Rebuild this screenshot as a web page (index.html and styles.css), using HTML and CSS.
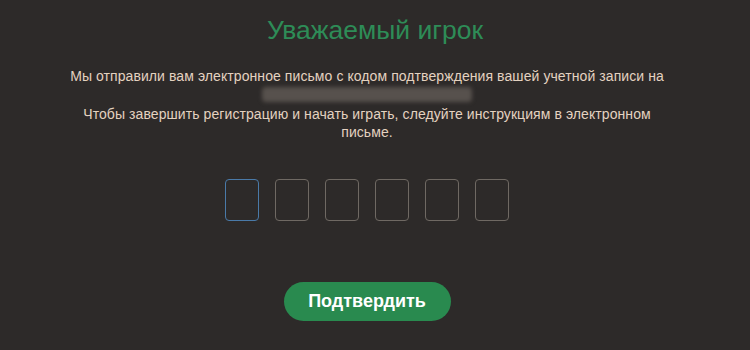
FILE: index.html
```html
<!DOCTYPE html>
<html lang="ru">
<head>
<meta charset="utf-8">
<link rel="stylesheet" href="styles.css">
</head>
<body>
<main class="page">
  <h1 class="title">Уважаемый игрок</h1>
  <section class="content">
    <p class="text">Мы отправили вам электронное письмо с кодом подтверждения вашей учетной записи на</p>
    <div class="email" aria-hidden="true"></div>
    <p class="text text-wrap">Чтобы завершить регистрацию и начать играть, следуйте инструкциям в электронном письме.</p>
    <div class="codes">
      <div class="code code-active"></div>
      <div class="code"></div>
      <div class="code"></div>
      <div class="code"></div>
      <div class="code"></div>
      <div class="code"></div>
    </div>
    <button class="confirm">Подтвердить</button>
  </section>
</main>
</body>
</html>
```
FILE: styles.css
```css
* { box-sizing: border-box; }
html, body {
  margin: 0;
  height: 100%;
  background: #2d2a29;
}
body {
  font-family: "Liberation Sans", Arial, sans-serif;
  color: #e4d2c0;
  overflow: hidden;
}
.page {
  display: flex;
  flex-direction: column;
  align-items: center;
  text-align: center;
  padding-top: 14px;
}
.title {
  margin: 0;
  font-size: 26.5px;
  font-weight: normal;
  color: #2e8c57;
  line-height: 32px;
}
.content {
  display: flex;
  flex-direction: column;
  align-items: center;
  padding-right: 16px;
}
.text {
  margin: 0;
  font-size: 14px;
  letter-spacing: 0.08px;
  line-height: 18px;
}
.content > .text:first-child {
  margin-top: 21px;
}
.email {
  width: 210px;
  height: 15px;
  margin-top: 2px;
  background: #57514d;
  border-radius: 4px;
  filter: blur(2px);
}
.text-wrap {
  margin-top: 3px;
  width: 600px;
}
.codes {
  display: flex;
  gap: 16px;
  margin-top: 38px;
}
.code {
  width: 34px;
  height: 42px;
  border: 1px solid #6f6963;
  border-radius: 4px;
}
.code-active {
  border-color: #4a7aa8;
}
.confirm {
  margin-top: 61px;
  width: 167px;
  height: 39px;
  border: none;
  border-radius: 20px;
  background: #298a4f;
  color: #ffffff;
  font-family: "Liberation Sans", Arial, sans-serif;
  font-weight: bold;
  font-size: 18px;
  padding: 0;
}
```
